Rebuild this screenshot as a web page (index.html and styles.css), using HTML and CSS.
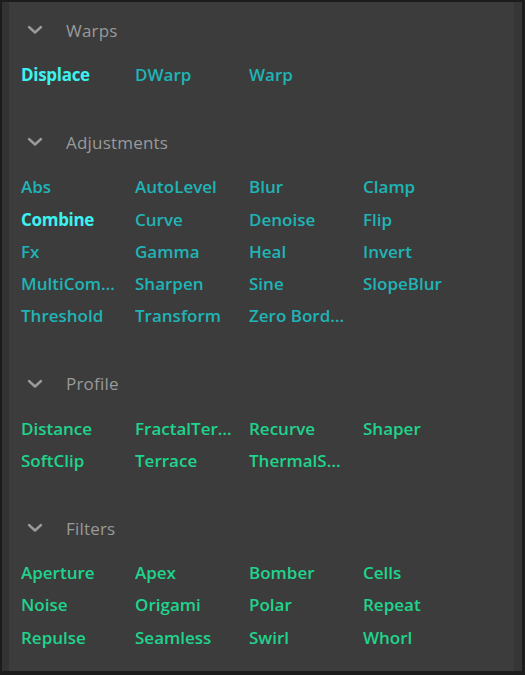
FILE: index.html
```html
<!DOCTYPE html>
<html>
<head>
<meta charset="utf-8">
<link rel="stylesheet" href="styles.css">
</head>
<body>
<div class="frame">
  <div class="strip-left"></div>
  <div class="panel">
    <section class="section">
      <div class="header">
        <svg class="chev" width="16" height="10" viewBox="0 0 16 10"><path d="M2 2 L8 7.5 L14 2" fill="none" stroke="#9a9a9a" stroke-width="2.4" stroke-linecap="round" stroke-linejoin="round"/></svg>
        <span class="title">Warps</span>
      </div>
      <div class="grid teal">
        <span class="item active">Displace</span>
        <span class="item">DWarp</span>
        <span class="item">Warp</span>
      </div>
    </section>
    <section class="section">
      <div class="header">
        <svg class="chev" width="16" height="10" viewBox="0 0 16 10"><path d="M2 2 L8 7.5 L14 2" fill="none" stroke="#9a9a9a" stroke-width="2.4" stroke-linecap="round" stroke-linejoin="round"/></svg>
        <span class="title">Adjustments</span>
      </div>
      <div class="grid teal">
        <span class="item">Abs</span>
        <span class="item">AutoLevel</span>
        <span class="item">Blur</span>
        <span class="item">Clamp</span>
        <span class="item active">Combine</span>
        <span class="item">Curve</span>
        <span class="item">Denoise</span>
        <span class="item">Flip</span>
        <span class="item">Fx</span>
        <span class="item">Gamma</span>
        <span class="item">Heal</span>
        <span class="item">Invert</span>
        <span class="item">MultiCombine</span>
        <span class="item">Sharpen</span>
        <span class="item">Sine</span>
        <span class="item">SlopeBlur</span>
        <span class="item">Threshold</span>
        <span class="item">Transform</span>
        <span class="item">Zero Borders</span>
      </div>
    </section>
    <section class="section">
      <div class="header">
        <svg class="chev" width="16" height="10" viewBox="0 0 16 10"><path d="M2 2 L8 7.5 L14 2" fill="none" stroke="#9a9a9a" stroke-width="2.4" stroke-linecap="round" stroke-linejoin="round"/></svg>
        <span class="title">Profile</span>
      </div>
      <div class="grid green">
        <span class="item">Distance</span>
        <span class="item">FractalTerrace</span>
        <span class="item">Recurve</span>
        <span class="item">Shaper</span>
        <span class="item">SoftClip</span>
        <span class="item">Terrace</span>
        <span class="item">ThermalShaper</span>
      </div>
    </section>
    <section class="section">
      <div class="header">
        <svg class="chev" width="16" height="10" viewBox="0 0 16 10"><path d="M2 2 L8 7.5 L14 2" fill="none" stroke="#9a9a9a" stroke-width="2.4" stroke-linecap="round" stroke-linejoin="round"/></svg>
        <span class="title">Filters</span>
      </div>
      <div class="grid green">
        <span class="item">Aperture</span>
        <span class="item">Apex</span>
        <span class="item">Bomber</span>
        <span class="item">Cells</span>
        <span class="item">Noise</span>
        <span class="item">Origami</span>
        <span class="item">Polar</span>
        <span class="item">Repeat</span>
        <span class="item">Repulse</span>
        <span class="item">Seamless</span>
        <span class="item">Swirl</span>
        <span class="item">Whorl</span>
      </div>
    </section>
  </div>
  <div class="strip-right"></div>
</div>
</body>
</html>
```
FILE: styles.css
```css
html, body {
  margin: 0;
  padding: 0;
  background: #1c1c1c;
}
.frame {
  box-sizing: border-box;
  width: 525px;
  height: 675px;
  border-top: 2px solid #1c1c1c;
  border-left: 2px solid #1c1c1c;
  border-right: 3px solid #1c1c1c;
  border-bottom: 4px solid #1c1c1c;
  display: flex;
  overflow: hidden;
  font-family: "Open Sans", "Liberation Sans", sans-serif;
}
.strip-left {
  width: 7px;
  background: #333333;
  flex: none;
}
.strip-right {
  width: 8px;
  background: #363636;
  flex: none;
}
.panel {
  flex: 1;
  background: #3c3c3c;
  padding: 12px 0 0 12px;
  display: flex;
  flex-direction: column;
  gap: 35px;
}
.header {
  height: 32px;
  display: flex;
  align-items: center;
  margin-bottom: 13px;
}
.chev {
  margin-left: 6px;
  flex: none;
}
.title {
  margin-left: 23px;
  color: #9a9a9a;
  font-size: 17px;
  font-weight: 400;
  letter-spacing: 0.2px;
}
.grid {
  display: grid;
  grid-template-columns: repeat(4, 99px);
  column-gap: 15px;
  grid-auto-rows: 32.25px;
  align-items: center;
}
.item {
  font-size: 17px;
  font-weight: 600;
  white-space: nowrap;
  overflow: hidden;
  text-overflow: ellipsis;
  line-height: 22px;
}
.teal .item { color: #1fb4b6; }
.green .item { color: #1fd48c; }
.item.active {
  color: #3cf2f0;
  font-weight: 700;
  letter-spacing: -0.3px;
}
```
